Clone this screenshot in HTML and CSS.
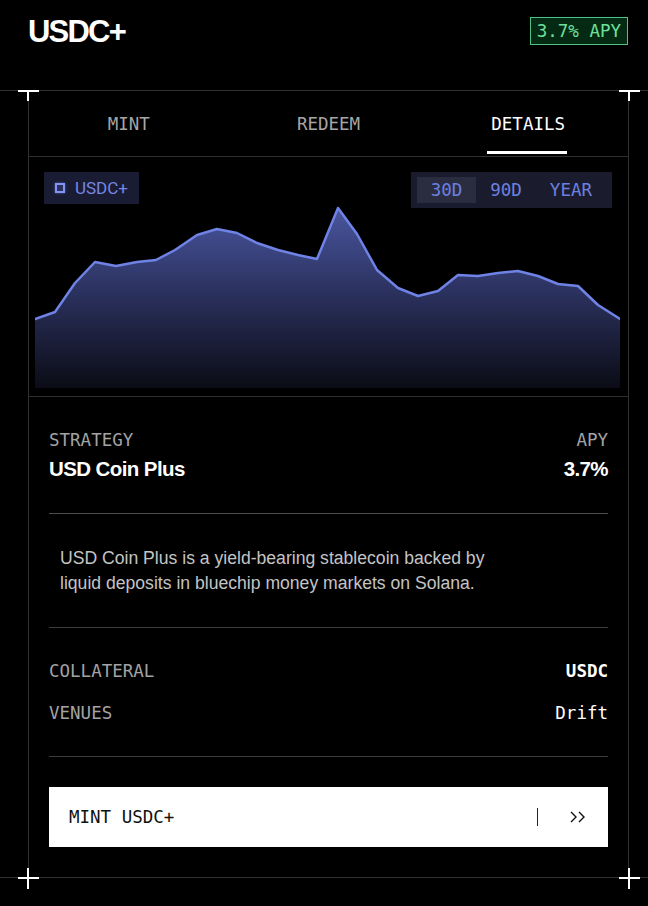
FILE: index.html
```html
<!DOCTYPE html>
<html lang="en">
<head>
<meta charset="utf-8">
<title>USDC+</title>
<link rel="stylesheet" href="styles.css">
</head>
<body>
<header class="top">
  <h1 class="title">USDC+</h1>
  <span class="apy">3.7% APY</span>
</header>
<div class="frame">
  <section class="card">
    <span class="corner corner-tl"></span>
    <span class="corner corner-tr"></span>
    <span class="corner corner-bl"></span>
    <span class="corner corner-br"></span>

    <nav class="tabs">
      <div class="tab">MINT</div>
      <div class="tab">REDEEM</div>
      <div class="tab active">DETAILS</div>
    </nav>

    <div class="chart">
      <div class="chart-controls">
        <div class="chip"><span class="chip-icon"></span><span class="chip-label">USDC+</span></div>
        <div class="range">
          <span class="range-btn active">30D</span>
          <span class="range-btn">90D</span>
          <span class="range-btn">YEAR</span>
        </div>
      </div>
      <svg class="chart-svg" width="585" height="231" viewBox="0 0 585 231">
        <defs>
          <linearGradient id="fillGrad" gradientUnits="userSpaceOnUse" x1="0" y1="50" x2="0" y2="231">
            <stop offset="0" stop-color="#4a56a0"/>
            <stop offset="0.45" stop-color="#2c3361"/>
            <stop offset="1" stop-color="#0b0c16"/>
          </linearGradient>
        </defs>
        <polygon fill="url(#fillGrad)" points="0,162 20,155 40,126 60,105 81,109 102,105 121,103 140,93 162,78 182,72 202,76 222,86 243,93 263,98 282,102 303,51 322,77 342,113 363,131 383,139 403,134 423,118 443,119 463,116 483,114 503,119 523,127 543,129 563,148 585,162 585,231 0,231"/>
        <polyline fill="none" stroke="#6f83e6" stroke-width="2.5" stroke-linejoin="round" stroke-linecap="round" points="0,162 20,155 40,126 60,105 81,109 102,105 121,103 140,93 162,78 182,72 202,76 222,86 243,93 263,98 282,102 303,51 322,77 342,113 363,131 383,139 403,134 423,118 443,119 463,116 483,114 503,119 523,127 543,129 563,148 585,162"/>
      </svg>
    </div>

    <div class="details">
      <div class="summary">
        <div class="col">
          <div class="label">STRATEGY</div>
          <div class="value">USD Coin Plus</div>
        </div>
        <div class="col col-right">
          <div class="label">APY</div>
          <div class="value">3.7%</div>
        </div>
      </div>
      <div class="desc"><p class="desc-text">USD Coin Plus is a yield-bearing stablecoin backed by liquid deposits in bluechip money markets on Solana.</p></div>
      <div class="specs">
        <div class="spec"><span class="label">COLLATERAL</span><span class="spec-value strong">USDC</span></div>
        <div class="spec"><span class="label">VENUES</span><span class="spec-value">Drift</span></div>
      </div>
      <div class="cta">
        <span class="cta-label">MINT USDC+</span>
        <span class="cta-sep"></span>
        <svg class="cta-arrows" width="16" height="12" viewBox="0 0 16 12"><path d="M1 1 L6 6 L1 11 M9 1 L14 6 L9 11" fill="none" stroke="#111" stroke-width="1.4"/></svg>
      </div>
    </div>
  </section>
</div>
</body>
</html>
```

FILE: styles.css
```css
html, body {
  margin: 0;
  padding: 0;
  background: #000;
}
body {
  width: 648px;
  height: 906px;
  overflow: hidden;
  font-family: "Liberation Sans", Arial, sans-serif;
  color: #fff;
}

.top {
  height: 62px;
  display: flex;
  align-items: center;
  justify-content: space-between;
  padding: 0 20px 0 28px;
  margin-bottom: 28px;
}
.title {
  margin: 0;
  font-size: 31px;
  font-weight: 700;
  letter-spacing: -1.8px;
  line-height: 1;
  color: #fff;
}
.apy {
  font-family: "DejaVu Sans Mono", "Liberation Mono", monospace;
  font-size: 17.5px;
  line-height: 20px;
  color: #6fe09a;
  background: #052a14;
  border: 1px solid #4fc283;
  padding: 3px 6px;
}

.frame {
  border-top: 1px solid #303030;
  border-bottom: 1px solid #303030;
}
.card {
  position: relative;
  margin-left: 28px;
  width: 601px;
  box-sizing: border-box;
  border-left: 1px solid #303030;
  border-right: 1px solid #303030;
}

.corner { position: absolute; }
.corner::before, .corner::after {
  content: "";
  position: absolute;
  background: #fff;
}
.corner-tl { left: -1px; top: -1px; }
.corner-tr { right: -1px; top: -1px; }
.corner-bl { left: -1px; bottom: -1px; }
.corner-br { right: -1px; bottom: -1px; }
.corner::before { width: 21px; height: 2px; left: -10px; top: 0; }
.corner::after { width: 2px; height: 11px; left: -1px; top: 0; }
.corner-bl::before, .corner-br::before { top: -1px; }
.corner-bl::after, .corner-br::after { height: 21px; top: -10px; }

.tabs {
  display: grid;
  grid-template-columns: repeat(3, 1fr);
  height: 65px;
  border-bottom: 1px solid #303030;
}
.tab {
  position: relative;
  display: flex;
  align-items: center;
  justify-content: center;
  font-family: "DejaVu Sans Mono", "Liberation Mono", monospace;
  font-size: 17.5px;
  color: #a6a6a6;
}
.tab.active { color: #fff; }
.tab.active::after {
  content: "";
  position: absolute;
  left: 50%;
  bottom: 2px;
  width: 80px;
  margin-left: -41px;
  height: 3px;
  background: #fff;
}

.chart {
  position: relative;
  height: 231px;
  padding: 0 8px 8px 6px;
  border-bottom: 1px solid #303030;
}
.chart-svg { display: block; }
.chart-controls {
  position: absolute;
  top: 15px;
  left: 15px;
  right: 16px;
  display: flex;
  justify-content: space-between;
  align-items: flex-start;
}
.chip {
  display: flex;
  align-items: center;
  gap: 10px;
  height: 32px;
  padding: 0 11px;
  background: #191c33;
}
.chip-icon {
  width: 6px;
  height: 6px;
  border: 2px solid #8494f2;
  background: #2a3160;
  box-shadow: 0 0 3px rgba(120, 140, 240, 0.6);
}
.chip-label {
  font-family: Roboto, "Liberation Sans", sans-serif;
  font-size: 17px;
  color: #7687e4;
}
.range {
  display: flex;
  padding: 5px 6px;
  background: #1a1c2d;
}
.range-btn {
  height: 26px;
  line-height: 26px;
  padding: 0 14px;
  font-family: "DejaVu Sans Mono", "Liberation Mono", monospace;
  font-size: 17.5px;
  color: #6d80e0;
}
.range-btn.active { background: #2a2d3f; }

.details {
  padding: 0 20px 30px 20px;
}
.label {
  font-family: "DejaVu Sans Mono", "Liberation Mono", monospace;
  font-size: 17.5px;
  line-height: 20px;
  color: #a3a3a3;
}
.summary {
  display: flex;
  justify-content: space-between;
  padding: 33px 0 31px;
  border-bottom: 1px solid #4d4d4d;
}
.col-right { text-align: right; }
.value {
  margin-top: 6px;
  font-size: 20.5px;
  line-height: 26px;
  font-weight: 700;
  letter-spacing: -0.6px;
  color: #fff;
}
.desc {
  padding: 32px 11px 31px;
  border-bottom: 1px solid #3c3c3c;
}
.desc-text {
  margin: 0;
  max-width: 440px;
  font-size: 17.6px;
  line-height: 25px;
  color: #c4c4c4;
}
.specs {
  display: flex;
  flex-direction: column;
  gap: 22px;
  padding: 33px 0;
  border-bottom: 1px solid #3c3c3c;
}
.spec {
  display: flex;
  justify-content: space-between;
  align-items: center;
}
.spec-value {
  font-family: "DejaVu Sans Mono", "Liberation Mono", monospace;
  font-size: 17.5px;
  line-height: 20px;
  color: #fff;
}
.spec-value.strong { font-weight: 700; }

.cta {
  display: flex;
  align-items: center;
  height: 60px;
  margin-top: 30px;
  padding: 0 22px 0 20px;
  background: #fff;
  font-family: "DejaVu Sans Mono", "Liberation Mono", monospace;
  font-size: 17.5px;
  color: #111;
}
.cta-label { flex: 1; }
.cta-sep {
  width: 1px;
  height: 18px;
  background: #222;
  margin-right: 32px;
}
.cta-arrows { display: block; }
```
